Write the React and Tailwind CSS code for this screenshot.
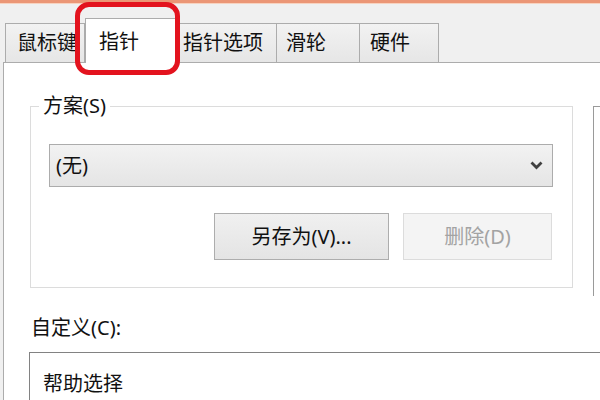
const tabs = [
  { label: "鼠标键", w: "w-[80px]", pl: "pl-[11px]" },
  { label: "指针", w: "w-[92px]", pl: "pl-[13px]", active: true },
  { label: "指针选项", w: "w-[101px]", pl: "pl-[6px]" },
  { label: "滑轮", w: "w-[84px]", pl: "pl-[9px]" },
  { label: "硬件", w: "w-[80px]", pl: "pl-[10px]" },
];

const Chevron = () => (
  <svg width="13" height="9" viewBox="0 0 13 9" className="text-[#404040]">
    <polyline points="1.5,1.5 6.5,6.5 11.5,1.5" fill="none" stroke="currentColor" strokeWidth="2.8" />
  </svg>
);

const App = () => {
  return (
    <div
      className="relative w-[600px] h-[400px] overflow-hidden bg-[#f0f0f0] text-[20px] text-[#111] flex flex-col"
      style={{ fontFamily: '"Noto Sans", "Noto Sans CJK SC", sans-serif' }}
    >
      <div className="shrink-0 h-[3px] bg-[#eb9676]" />
      <div className="shrink-0 h-px bg-[#f7d3c0]" />

      {/* tab strip */}
      <div className="shrink-0 flex items-end h-[58px] pl-[5px]">
        {tabs.map((t) =>
          t.active ? (
            <div
              key={t.label}
              className={`${t.w} ${t.pl} relative z-10 -mb-px h-[45px] bg-white border border-b-0 border-[#acacac] flex items-center pt-[2px]`}
            >
              {t.label}
            </div>
          ) : (
            <div
              key={t.label}
              className={`${t.w} ${t.pl} h-[39px] bg-gradient-to-b from-[#f2f2f2] to-[#e6e6e6] border border-b-0 border-[#acacac] -ml-px first:ml-0 flex items-center leading-none overflow-hidden whitespace-nowrap`}
            >
              {t.label}
            </div>
          )
        )}
      </div>

      {/* panel */}
      <div className="flex-1 min-h-0 ml-[3px] bg-white border-t border-l border-[#acacac] pl-[26px] pt-[31px]">
        <div className="flex">
          <fieldset className="shrink-0 w-[543px] h-[194px] border border-[#dcdcdc] px-[18px] pb-[27px]">
            <legend className="-ml-[10px] px-[4px] leading-[24px]">方案(S)</legend>
            <div className="mt-[26px] w-[504px] h-[43px] border border-[#acacac] bg-gradient-to-b from-[#f2f2f2] to-[#e5e5e5] flex items-center justify-between pl-[6px] pr-[9px]">
              <span>(无)</span>
              <Chevron />
            </div>
            <div className="mt-[26px] flex justify-end gap-[14px] pr-[2px]">
              <button className="w-[175px] h-[47px] border border-[#adadad] bg-gradient-to-b from-[#f0f0f0] to-[#e4e4e4] text-[20px]">
                另存为(V)...
              </button>
              <button className="w-[149px] h-[47px] border border-[#dcdcdc] bg-[#f4f4f4] text-[#a3a3a3] text-[20px]">
                删除(D)
              </button>
            </div>
          </fieldset>
          <div className="ml-[20px] mt-[12px] flex-1 h-[190px] border-t border-l border-[#9a9a9a]" />
        </div>

        <div className="mt-[20px] leading-[24px] pl-[1px]">自定义(C):</div>
        <div className="mt-[12px] -ml-px h-[50px] border-t border-l border-[#828282] pl-[13px] pt-[19px] leading-[24px]">
          帮助选择
        </div>
      </div>

      {/* red highlight drawn over the screenshot */}
      <div className="absolute left-[75px] top-[2px] w-[105px] h-[73px] border-[5px] border-[#e3131e] rounded-[14px] z-20" />
    </div>
  );
};

export default App;
